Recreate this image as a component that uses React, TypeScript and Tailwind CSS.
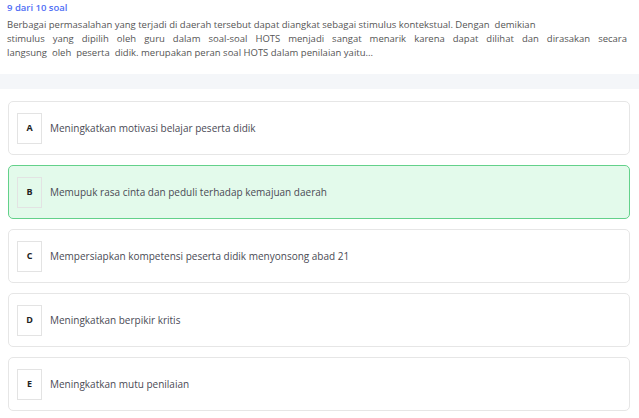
import React from 'react';

const options = [
  { key: 'A', text: 'Meningkatkan motivasi belajar peserta didik', active: false },
  { key: 'B', text: 'Memupuk rasa cinta dan peduli terhadap kemajuan daerah', active: true },
  { key: 'C', text: 'Mempersiapkan kompetensi peserta didik menyonsong abad 21', active: false },
  { key: 'D', text: 'Meningkatkan berpikir kritis', active: false },
  { key: 'E', text: 'Meningkatkan mutu penilaian', active: false },
];

const App = () => {
  return (
    <div className="min-h-screen w-[639px] bg-white" style={{ fontFamily: '"Open Sans", "Noto Sans", sans-serif' }}>
      {/* Question card */}
      <div className="bg-white px-[7px] pt-[1px] h-[74px] shadow-[0_2px_3px_rgba(0,0,0,0.08)]">
        <div className="text-[9.5px] font-semibold text-[#4f6ef5] leading-[13px]">9 dari 10 soal</div>
        <div className="text-[9.5px] text-[#555] leading-[14px] mt-[4px] pr-[5px]">
          <div>Berbagai permasalahan yang terjadi di daerah tersebut dapat diangkat sebagai stimulus kontekstual. Dengan&nbsp; demikian</div>
          <div className="text-justify [text-align-last:justify]">stimulus yang dipilih oleh guru dalam soal-soal HOTS menjadi sangat menarik karena dapat dilihat dan dirasakan secara</div>
          <div>langsung&nbsp; oleh&nbsp; peserta&nbsp; didik. merupakan peran soal HOTS dalam penilaian yaitu...</div>
        </div>
      </div>
      <div className="h-[15px] bg-[#f4f6f9]" />

      {/* Options */}
      <div className="flex flex-col gap-[10px] pl-[8px] pr-[9px] pt-[12px]">
        {options.map((o) => (
          <div
            key={o.key}
            className={
              o.active
                ? 'flex items-center h-[54px] rounded-[5px] border border-[#63d18a] bg-[#e3faeb] pl-[8px]'
                : 'flex items-center h-[54px] rounded-[5px] border border-[#e6e6e6] bg-white pl-[8px]'
            }
          >
            <div className="w-[25px] h-[31px] border border-[#e3e3e3] flex items-center justify-center text-[9px] font-bold text-[#222]">
              {o.key}
            </div>
            <div className="ml-[8px] text-[10px] text-[#4a4a55]">{o.text}</div>
          </div>
        ))}
      </div>
    </div>
  );
};

export default App;
